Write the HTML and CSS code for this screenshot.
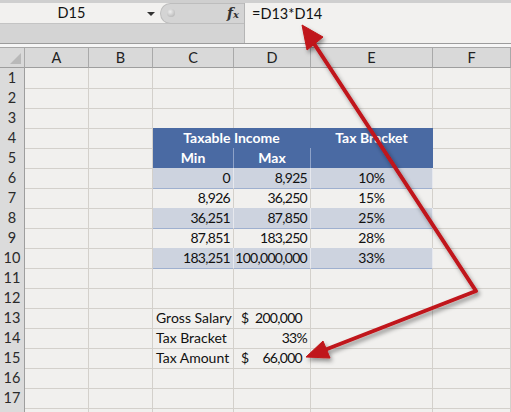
FILE: index.html
```
<!DOCTYPE html>
<html>
<head>
<meta charset="utf-8">
<link rel="stylesheet" href="styles.css">
</head>
<body>
<div class="page">
  <div class="toolbar">
    <div class="tb-left">
      <div class="namerow">
        <div class="namebox">D15</div>
        <div class="dd"></div>
        <div class="tools">
          <div class="grip"><span class="knob"></span></div>
          <div class="fx">f<span>x</span></div>
        </div>
      </div>
      <div class="tb-gray"></div>
    </div>
    <div class="formula">=D13*D14</div>
  </div>
  <div class="sep"></div>
  <div class="sheet">
    <div class="r colhead"><div class="corner"><span class="tri"></span></div><div class="ch">A</div><div class="ch">B</div><div class="ch">C</div><div class="ch">D</div><div class="ch">E</div><div class="ch">F</div></div>
    <div class="r"><div class="h">1</div><div class="c"></div><div class="c"></div><div class="c"></div><div class="c"></div><div class="c"></div><div class="c"></div></div>
    <div class="r"><div class="h">2</div><div class="c"></div><div class="c"></div><div class="c"></div><div class="c"></div><div class="c"></div><div class="c"></div></div>
    <div class="r"><div class="h">3</div><div class="c"></div><div class="c"></div><div class="c"></div><div class="c"></div><div class="c"></div><div class="c"></div></div>
    <div class="r"><div class="h">4</div><div class="c"></div><div class="c"></div><div class="c th span2">Taxable Income</div><div class="c th">Tax Bracket</div><div class="c"></div></div>
    <div class="r"><div class="h">5</div><div class="c"></div><div class="c"></div><div class="c th th2">Min</div><div class="c th th2">Max</div><div class="c th"></div><div class="c"></div></div>
    <div class="r"><div class="h">6</div><div class="c"></div><div class="c"></div><div class="c band num">0</div><div class="c band num">8,925</div><div class="c band pct">10%</div><div class="c"></div></div>
    <div class="r"><div class="h">7</div><div class="c"></div><div class="c"></div><div class="c plain num">8,926</div><div class="c plain num">36,250</div><div class="c plain pct">15%</div><div class="c"></div></div>
    <div class="r"><div class="h">8</div><div class="c"></div><div class="c"></div><div class="c band num">36,251</div><div class="c band num">87,850</div><div class="c band pct">25%</div><div class="c"></div></div>
    <div class="r"><div class="h">9</div><div class="c"></div><div class="c"></div><div class="c plain num">87,851</div><div class="c plain num">183,250</div><div class="c plain pct">28%</div><div class="c"></div></div>
    <div class="r"><div class="h">10</div><div class="c"></div><div class="c"></div><div class="c band num">183,251</div><div class="c band num">100,000,000</div><div class="c band pct">33%</div><div class="c"></div></div>
    <div class="r"><div class="h">11</div><div class="c"></div><div class="c"></div><div class="c"></div><div class="c"></div><div class="c"></div><div class="c"></div></div>
    <div class="r"><div class="h">12</div><div class="c"></div><div class="c"></div><div class="c"></div><div class="c"></div><div class="c"></div><div class="c"></div></div>
    <div class="r"><div class="h">13</div><div class="c"></div><div class="c"></div><div class="c lbl">Gross Salary</div><div class="c acc"><span>$</span><span>200,000</span></div><div class="c"></div><div class="c"></div></div>
    <div class="r"><div class="h">14</div><div class="c"></div><div class="c"></div><div class="c lbl">Tax Bracket</div><div class="c num">33%</div><div class="c"></div><div class="c"></div></div>
    <div class="r"><div class="h">15</div><div class="c"></div><div class="c"></div><div class="c lbl">Tax Amount</div><div class="c acc"><span>$</span><span>66,000</span></div><div class="c"></div><div class="c"></div></div>
    <div class="r"><div class="h">16</div><div class="c"></div><div class="c"></div><div class="c"></div><div class="c"></div><div class="c"></div><div class="c"></div></div>
    <div class="r"><div class="h">17</div><div class="c"></div><div class="c"></div><div class="c"></div><div class="c"></div><div class="c"></div><div class="c"></div></div>
    <div class="r"><div class="h"></div><div class="c"></div><div class="c"></div><div class="c"></div><div class="c"></div><div class="c"></div><div class="c"></div></div>
  </div>
  <svg class="arrows" width="511" height="412" viewBox="0 0 511 412">
    <defs>
      <filter id="sh" x="-20%" y="-20%" width="140%" height="140%">
        <feDropShadow dx="2" dy="3" stdDeviation="2" flood-color="#000" flood-opacity="0.4"/>
      </filter>
    </defs>
    <g filter="url(#sh)" fill="#c0141a" stroke="#c0141a">
      <polyline points="313,42 476,291 322,351" fill="none" stroke-width="4" stroke-linejoin="round"/>
      <polygon points="302,25 323,37 307,50" stroke-width="1" stroke-linejoin="round"/>
      <polygon points="306,357 323,341 330,358" stroke-width="1" stroke-linejoin="round"/>
    </g>
  </svg>
</div>
</body>
</html>
```
FILE: styles.css
```
* { box-sizing: border-box; }
html, body { margin: 0; padding: 0; }
body {
  width: 511px;
  height: 412px;
  overflow: hidden;
  background: #f1f0ee;
  font-family: "Lato", "Liberation Sans", sans-serif;
  font-size: 14px;
  color: #111;
}
.page { position: relative; width: 511px; height: 412px; overflow: hidden; }

.toolbar {
  display: flex;
  height: 44px;
  background: #d6d6d6;
  border-top: 3px solid #cfcfcf;
  border-bottom: 1px solid #9c9c9c;
}
.tb-left { width: 244px; display: flex; flex-direction: column; }
.namerow { display: flex; height: 21px; border-bottom: 1px solid #c4c4c4; }
.namebox {
  width: 140px;
  background: #f2f1ef;
  text-align: center;
  line-height: 20px;
  font-size: 14.5px;
  color: #111;
  padding-left: 3px;
}
.dd {
  width: 20px;
  background: #f2f1ef;
  position: relative;
}
.dd::after {
  content: "";
  position: absolute;
  left: 7px; top: 9px;
  border-left: 4px solid transparent;
  border-right: 4px solid transparent;
  border-top: 4px solid #333;
}
.tools {
  flex: 1;
  display: flex;
  align-items: center;
  background: #f2f1ef;
  position: relative;
}
.grip {
  width: 84px;
  height: 21px;
  background: #d4d4d4;
  border-radius: 11px 0 0 11px;
  border: 1px solid #bdbdbd;
  border-right: none;
  display: flex;
  align-items: center;
  padding-left: 6px;
}
.knob {
  width: 8px; height: 8px; border-radius: 50%;
  background: radial-gradient(circle at 40% 35%, #eee, #aaa);
}
.fx {
  position: absolute;
  right: 5px;
  top: 1px;
  font-family: "DejaVu Serif", "Liberation Serif", serif;
  font-style: italic;
  font-weight: bold;
  font-size: 14px;
  color: #333;
  line-height: 18px;
}
.fx span { font-size: 10px; }
.tb-gray { flex: 1; background: #d4d4d4; }
.formula {
  flex: 1;
  background: #f2f1ef;
  border-left: 1px solid #b5b5b5;
  padding: 1px 0 0 7px;
  line-height: 20px;
  font-size: 14.5px;
  color: #111;
}
.sep {
  height: 4px;
  background: #f6f6f6;
  border-bottom: 1px solid #a8a8a8;
}

.sheet { display: flex; flex-direction: column; }
.r {
  display: grid;
  grid-template-columns: 25px 64px 64px 81px 77px 122px 78px;
  height: 20px;
}
.corner {
  background: #d9d9d9;
  border-right: 1px solid #a9a9a9;
  border-bottom: 1px solid #9e9e9e;
  position: relative;
}
.tri {
  position: absolute;
  right: 3px; bottom: 3px;
  width: 0; height: 0;
  border-left: 11px solid transparent;
  border-bottom: 11px solid #b9b9b9;
}
.ch {
  background: #d9d9d9;
  border-right: 1px solid #a9a9a9;
  border-bottom: 1px solid #9e9e9e;
  text-align: center;
  line-height: 19px;
  font-size: 14.5px;
  color: #222;
}
.h {
  background: #dbdbdb;
  border-right: 1px solid #9e9e9e;
  border-bottom: 1px solid #bdbdbd;
  text-align: center;
  line-height: 20px;
  font-size: 14.5px;
  color: #2a2a2a;
}
.c {
  border-right: 1px solid #d3d0cb;
  border-bottom: 1px solid #d3d0cb;
  line-height: 20px;
  white-space: nowrap;
  padding: 0 3px;
}
.span2 { grid-column: span 2; }
.th {
  background: #4a6aa3;
  color: #fff;
  font-weight: bold;
  text-align: center;
  border-right-color: #4a6aa3;
  border-bottom-color: #4a6aa3;
}
.th2 { border-right-color: #8ea2c8; }
.band { background: #cdd3df; border-bottom-color: #9fb0cf; border-right-color: #e6e8ee; }
.plain { border-bottom-color: #9fb0cf; }
.num { text-align: right; letter-spacing: -0.7px; padding: 0 3px 0 0; }
.pct { text-align: center; letter-spacing: -0.4px; }
.lbl { padding-left: 3px; }
.acc {
  display: flex;
  justify-content: space-between;
  padding: 0 8px 0 7px;
  letter-spacing: -0.7px;
}

.arrows { position: absolute; left: 0; top: 0; pointer-events: none; }
```
